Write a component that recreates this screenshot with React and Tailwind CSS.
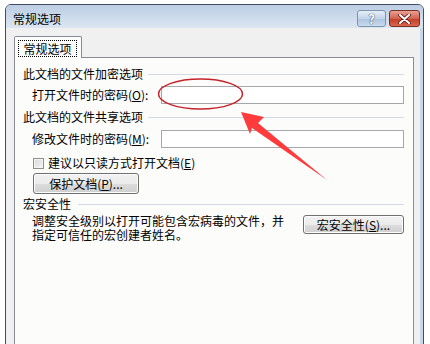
import React from 'react';

const font = "font-['Noto_Sans_CJK_SC','Noto_Sans',sans-serif]";

function Section({ title, gap = 'gap-[5px]' }) {
  return (
    <div className={`flex items-center h-[14px] pl-[8px] ${gap}`}>
      <span className="text-[12px] leading-[12px] text-black whitespace-nowrap">{title}</span>
      <div className="flex-1 h-px bg-[#d3dae3]" />
    </div>
  );
}

function Btn({ children, className = '' }) {
  return (
    <button
      className={`flex items-center justify-center border border-[#707070] rounded-[3px] bg-[linear-gradient(#f2f2f2_0%,#ebebeb_50%,#dddddd_51%,#cfcfcf_100%)] text-[12px] leading-[12px] text-black shadow-[inset_0_0_0_1px_#fcfcfc] ${className}`}
    >
      {children}
    </button>
  );
}

export default function App() {
  return (
    <div className={`relative w-[430px] h-[344px] bg-white overflow-hidden ${font}`}>
      <div className="ml-[5px] mt-[4px] w-[419px] h-[360px] flex flex-col border border-[#3f4e62] rounded-t-[6px] bg-[#f0f0f0] shadow-[inset_-3px_0_0_#c8d8ea]">
        {/* title bar */}
        <div className="flex items-start h-[23px] pl-[7px] pr-[3px] rounded-t-[5px] bg-[linear-gradient(#bccee4,#cfdcec_60%,#dce6f1)]">
          <span className="mt-[8px] text-[12px] leading-[12px] text-black">常规选项</span>
          <div className="ml-auto mt-[5px] flex gap-[3px]">
            <div className="w-[29px] h-[17px] flex items-center justify-center rounded-[3px] border border-[#7d93ad] bg-[linear-gradient(#e4eef8,#c3d5ea_50%,#abc3de_51%,#c8dbef)]">
              <span className="text-[13px] leading-[13px] font-bold text-white [text-shadow:0_0_1px_#2b3a4d,0_0_1px_#2b3a4d]">?</span>
            </div>
            <div className="w-[31px] h-[17px] flex items-center justify-center rounded-[3px] border border-[#7a3027] bg-[linear-gradient(#e8a394,#d0624f_50%,#c23c26_51%,#d9664c)]">
              <svg width="13" height="10" viewBox="0 0 13 10">
                <path d="M2 1 L11 9 M11 1 L2 9" stroke="#5a1a12" strokeWidth="3.6" strokeLinecap="round" />
                <path d="M2 1 L11 9 M11 1 L2 9" stroke="#ffffff" strokeWidth="2" strokeLinecap="round" />
              </svg>
            </div>
          </div>
        </div>

        {/* client */}
        <div className="flex-1 flex flex-col pl-[8px] pr-[9px] pt-[8px]">
          <div className="relative z-10 -mb-px w-[68px] h-[22px] border border-b-0 border-[#898c95] bg-[#fcfcfc] rounded-t-[2px] pt-[3px] pl-[3px]">
            <div className="w-[59px] h-[17px] border border-dotted border-black flex items-center justify-center">
              <span className="text-[12px] leading-[12px] text-black">常规选项</span>
            </div>
          </div>

          <div className="flex-1 flex flex-col border border-[#898c95] bg-[#fcfcfb] pr-[9px]">
            <div className="mt-[9px]">
              <Section title="此文档的文件加密选项" />
            </div>
            <div className="mt-[5px] flex items-center">
              <span className="w-[146px] pl-[17px] text-[12px] leading-[12px] text-black whitespace-nowrap">
                打开文件时的密码(<span className="underline">O</span>):
              </span>
              <div className="flex-1 h-[18px] border border-[#a5a7ab] bg-white" />
            </div>

            <div className="mt-[6px]">
              <Section title="此文档的文件共享选项" />
            </div>
            <div className="mt-[6px] flex items-center">
              <span className="w-[146px] pl-[17px] text-[12px] leading-[12px] text-black whitespace-nowrap">
                修改文件时的密码(<span className="underline">M</span>):
              </span>
              <div className="flex-1 h-[18px] border border-[#a5a7ab] bg-white" />
            </div>

            <div className="mt-[8px] h-[14px] flex items-center pl-[18px] gap-[4px]">
              <div className="w-[11px] h-[11px] border border-[#8f8f8f] bg-[linear-gradient(135deg,#d8d8d8,#f4f4f4)] shadow-[inset_0_0_0_1px_#f4f4f4]" />
              <span className="text-[12px] leading-[12px] text-black">
                建议以只读方式打开文档(<span className="underline">E</span>)
              </span>
            </div>

            <div className="mt-[3px] pl-[18px]">
              <Btn className="w-[106px] h-[21px]">
                保护文档(<span className="underline">P</span>)...
              </Btn>
            </div>

            <div className="mt-[3px]">
              <Section title="宏安全性" gap="gap-[7px]" />
            </div>

            <div className="mt-[3px] flex items-start pl-[17px]">
              <p className="text-[12px] leading-[14px] text-black whitespace-nowrap">
                调整安全级别以打开可能包含宏病毒的文件，并
                <br />
                指定可信任的宏创建者姓名。
              </p>
              <Btn className="ml-auto mt-[1px] w-[101px] h-[19px]">
                宏安全性(<span className="underline">S</span>)...
              </Btn>
            </div>
          </div>
        </div>
      </div>

      {/* annotation: ellipse + arrow */}
      <svg className="absolute inset-0 pointer-events-none" width="430" height="344" viewBox="0 0 430 344">
        <ellipse cx="200.5" cy="94" rx="42" ry="15" fill="none" stroke="#c5232b" strokeWidth="1.5" />
        <polygon points="241,112 264,117 258,123 327,180 252,128 250,134" fill="#ff3b3b" />
      </svg>
    </div>
  );
}
